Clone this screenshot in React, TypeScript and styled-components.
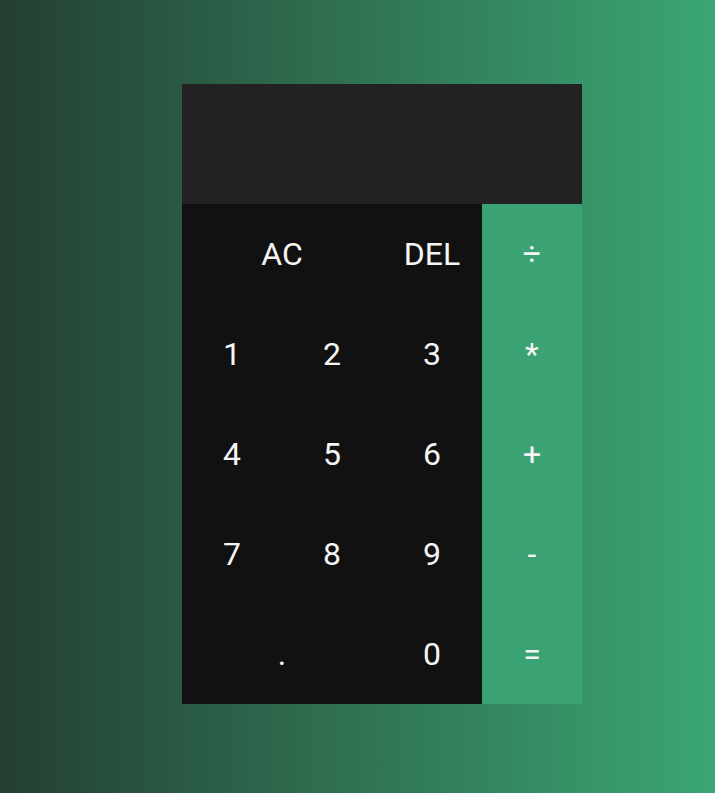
import React from "react";
import styled, { createGlobalStyle } from "styled-components";

const Global = createGlobalStyle`
  * { box-sizing: border-box; }
  html, body { margin: 0; padding: 0; }
  body {
    min-height: 100vh;
    background: linear-gradient(to right, #243f33, #3ba674);
    font-family: Roboto, "Noto Sans", sans-serif;
  }
`;

const Page = styled.div`
  min-height: 100vh;
  padding: 84px 0 0 182px;
`;

const Calculator = styled.div`
  display: grid;
  grid-template-columns: repeat(4, 100px);
  grid-template-rows: 120px repeat(5, 100px);
  width: 400px;
`;

const Display = styled.div`
  grid-column: 1 / -1;
  background: #222222;
  color: #ffffff;
  display: flex;
  flex-direction: column;
  align-items: flex-end;
  justify-content: space-around;
  padding: 10px;
`;

const Key = styled.button<{ $op?: boolean; $span?: number }>`
  grid-column: span ${(p) => p.$span ?? 1};
  border: none;
  outline: none;
  margin: 0;
  padding: 0;
  font-family: Roboto, "Noto Sans", sans-serif;
  font-size: 32px;
  color: #f5f5f5;
  background: ${(p) => (p.$op ? "#3ba273" : "#111111")};
  display: flex;
  align-items: center;
  justify-content: center;
  cursor: pointer;
`;

export default function App() {
  return (
    <>
      <Global />
      <Page>
        <Calculator>
          <Display />
          <Key $span={2}>AC</Key>
          <Key>DEL</Key>
          <Key $op>÷</Key>
          <Key>1</Key>
          <Key>2</Key>
          <Key>3</Key>
          <Key $op>*</Key>
          <Key>4</Key>
          <Key>5</Key>
          <Key>6</Key>
          <Key $op>+</Key>
          <Key>7</Key>
          <Key>8</Key>
          <Key>9</Key>
          <Key $op>-</Key>
          <Key $span={2}>.</Key>
          <Key>0</Key>
          <Key $op>=</Key>
        </Calculator>
      </Page>
    </>
  );
}
